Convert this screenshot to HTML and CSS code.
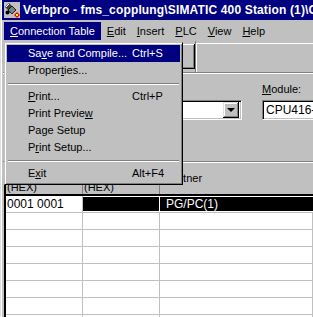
FILE: index.html
```html
<!DOCTYPE html>
<html lang="en">

<head>
    <meta charset="UTF-8">
    <meta name="viewport" content="width=device-width, initial-scale=1.0">
    <title>Verbpro</title>
    <link rel="stylesheet" href="styles.css">
</head>

<body>
    <div class="window">
        <div class="titlebar">
            <svg class="app-icon" width="16" height="16" viewBox="0 0 16 16">
                <rect width="16" height="16" fill="#c0c0c0"/>
                <path d="M1 5 L5 1 L8 4 L4 8 Z" fill="#404040"/>
                <path d="M2 5 L5 2" stroke="#ffffff" stroke-width="1"/>
                <path d="M4 8 L8 4 L12 8 L8 12 Z" fill="#808080" stroke="#000000" stroke-width="0.8"/>
                <circle cx="3.5" cy="10.5" r="2" fill="#000000"/>
                <path d="M10 13 L13 10 L16 13 L13 16 Z" fill="#ff0000"/>
                <rect x="12" y="12" width="2" height="2" fill="#ffff00"/>
            </svg>
            <span class="title">Verbpro - fms_copplung\SIMATIC 400 Station (1)\CPU416-1</span>
        </div>

        <div class="menubar">
            <div class="menu open">
                <span class="menu-label"><u>C</u>onnection Table</span>
                <div class="dropdown">
                    <div class="item active"><span class="label">Sa<u>v</u>e and Compile...</span><span class="key">Ctrl+S</span></div>
                    <div class="item"><span class="label">Proper<u>t</u>ies...</span></div>
                    <div class="separator"></div>
                    <div class="item"><span class="label"><u>P</u>rint...</span><span class="key">Ctrl+P</span></div>
                    <div class="item"><span class="label">Print Previe<u>w</u></span></div>
                    <div class="item"><span class="label">Page Setup</span></div>
                    <div class="item"><span class="label">P<u>r</u>int Setup...</span></div>
                    <div class="separator"></div>
                    <div class="item"><span class="label">E<u>x</u>it</span><span class="key">Alt+F4</span></div>
                </div>
            </div>
            <div class="menu"><span class="menu-label"><u>E</u>dit</span></div>
            <div class="menu"><span class="menu-label"><u>I</u>nsert</span></div>
            <div class="menu"><span class="menu-label"><u>P</u>LC</span></div>
            <div class="menu"><span class="menu-label"><u>V</u>iew</span></div>
            <div class="menu"><span class="menu-label"><u>H</u>elp</span></div>
        </div>

        <div class="toolbar">
            <div class="tools"><button class="tool"></button></div>
            <div class="tool-rest"></div>
        </div>

        <div class="panel">
            <div class="field field-station">
                <div class="combo"><span class="combo-text"></span><span class="combo-btn"></span></div>
            </div>
            <div class="field field-module">
                <label><u>M</u>odule:</label>
                <div class="textbox">CPU416-1</div>
            </div>
        </div>

        <div class="table">
            <div class="thead">
                <div class="th">(HEX)</div>
                <div class="th">(HEX)</div>
                <div class="th th-partner">Partner</div>
            </div>
            <div class="row selected">
                <div class="td">0001 0001</div>
                <div class="td"></div>
                <div class="td td-partner">PG/PC(1)</div>
            </div>
            <div class="row"><div class="td"></div><div class="td"></div><div class="td"></div></div>
            <div class="row"><div class="td"></div><div class="td"></div><div class="td"></div></div>
            <div class="row"><div class="td"></div><div class="td"></div><div class="td"></div></div>
            <div class="row"><div class="td"></div><div class="td"></div><div class="td"></div></div>
            <div class="row"><div class="td"></div><div class="td"></div><div class="td"></div></div>
            <div class="row"><div class="td"></div><div class="td"></div><div class="td"></div></div>
            <div class="row"><div class="td"></div><div class="td"></div><div class="td"></div></div>
        </div>
    </div>
</body>

</html>
```

FILE: styles.css
```css
body {
    margin: 0;
    background-color: #c0c0c0;
    font-family: "Liberation Sans", Arial, sans-serif;
    font-size: 11px;
    overflow: hidden;
}

.window {
    width: 313px;
    height: 317px;
    box-sizing: border-box;
    padding-left: 3px;
    overflow: hidden;
    background-color: #c0c0c0;
    box-shadow: inset 1px 0 #dfdfdf, inset 2px 0 #ffffff;
}

/* title bar */
.titlebar {
    display: flex;
    align-items: center;
    height: 20px;
    margin-left: -1px;
    margin-bottom: 1px;
    padding-left: 2px;
    background-color: #000080;
    color: #ffffff;
    white-space: nowrap;
    overflow: hidden;
}

.app-icon {
    flex: none;
    margin-right: 3px;
}

.title {
    font-weight: bold;
    font-size: 12px;
    letter-spacing: 0.15px;
}

/* menu bar */
.menubar {
    display: flex;
    height: 20px;
    padding-left: 1px;
}

.menu {
    position: relative;
}

.menu-label {
    display: block;
    margin-top: 1px;
    padding: 0 6px 0 6px;
    line-height: 18px;
    white-space: nowrap;
}

.menu + .menu .menu-label {
    padding: 0 5px 0 6px;
}

.menu.open .menu-label {
    background-color: #000080;
    color: #ffffff;
}

.dropdown {
    position: absolute;
    top: calc(100% + 1px);
    left: 0;
    z-index: 10;
    width: 179px;
    box-sizing: border-box;
    padding: 2px;
    background-color: #c0c0c0;
    border: 1px solid;
    border-color: #c0c0c0 #000000 #000000 #c0c0c0;
    box-shadow: inset 1px 1px #ffffff, inset -1px -1px #808080;
}

.item {
    display: flex;
    height: 17px;
    line-height: 17px;
    padding-left: 21px;
    white-space: nowrap;
}

.item .label {
    width: 104px;
}

.item.active {
    background-color: #000080;
    color: #ffffff;
}

.separator {
    height: 9px;
    box-sizing: border-box;
    padding-top: 4px;
}

.separator::before {
    content: "";
    display: block;
    margin: 0 1px;
    border-top: 1px solid #808080;
    border-bottom: 1px solid #ffffff;
}

/* toolbar */
.toolbar {
    display: flex;
    height: 32px;
    box-sizing: border-box;
    border-bottom: 1px solid #808080;
}

.tools {
    display: flex;
    justify-content: flex-end;
    width: 192px;
    border-right: 1px solid #808080;
}

.tool {
    width: 36px;
    height: 25px;
    margin-top: 3px;
    padding: 0;
    border: none;
    background-color: #c0c0c0;
    box-shadow: inset -1px -1px #000000, inset 1px 1px #ffffff, inset -2px -2px #808080;
}

.tool-rest {
    flex: 1;
    margin-top: 2px;
    border-top: 1px solid #ffffff;
    border-left: 1px solid #ffffff;
}

/* station / module panel */
.panel {
    display: flex;
    align-items: flex-end;
    gap: 20px;
    height: 89px;
    box-sizing: border-box;
    padding: 9px 0 0 57px;
    border-top: 1px solid #ffffff;
    border-bottom: 1px solid #808080;
    overflow: hidden;
}

.field {
    margin-bottom: 41px;
}

.field label {
    display: block;
    line-height: 13px;
    margin-bottom: 4px;
}

.field-station {
    flex: none;
    width: 182px;
}

.field-module {
    flex: none;
    width: 100px;
}

.combo,
.textbox {
    display: flex;
    align-items: center;
    height: 20px;
    box-sizing: border-box;
    padding: 2px;
    background-color: #ffffff;
    border: 1px solid;
    border-color: #808080 #ffffff #ffffff #808080;
    box-shadow: inset 1px 1px #000000, inset -1px -1px #c0c0c0;
}

.combo-text {
    flex: 1;
}

.combo-btn {
    position: relative;
    width: 16px;
    height: 16px;
    margin-top: -1px;
    background-color: #c0c0c0;
    box-shadow: inset -1px -1px #000000, inset 1px 1px #dfdfdf, inset -2px -2px #808080, inset 2px 2px #ffffff;
}

.combo-btn::after {
    content: "";
    position: absolute;
    left: 4px;
    top: 6px;
    border-left: 4px solid transparent;
    border-right: 4px solid transparent;
    border-top: 4px solid #000000;
}

.textbox {
    padding-left: 3px;
    font-size: 12px;
    white-space: nowrap;
    overflow: hidden;
}

/* connection table */
.table {
    margin-left: 1px;
    border-left: 2px solid #000000;
}

.thead,
.row {
    display: grid;
    grid-template-columns: 77px 77px 1fr;
}

.thead {
    height: 34px;
    box-sizing: border-box;
    border-top: 1px solid #ffffff;
    border-bottom: 2px solid #000000;
}

.th {
    display: flex;
    flex-direction: column;
    justify-content: flex-end;
    box-sizing: border-box;
    padding: 0 0 1px 1px;
    line-height: 12px;
    border-right: 1px solid #808080;
    white-space: nowrap;
    overflow: hidden;
}

.th-partner {
    justify-content: center;
    padding: 0 0 2px 6px;
    border-right: none;
}

.row {
    height: 17px;
    box-sizing: border-box;
    background-color: #ffffff;
    border-bottom: 1px solid #c0c0c0;
}

.td {
    box-sizing: border-box;
    padding-left: 1px;
    font-size: 12px;
    line-height: 16px;
    border-right: 1px solid #c0c0c0;
    white-space: nowrap;
}

.td-partner {
    padding-left: 6px;
    border-right: none;
}

.row.selected .td + .td {
    background-color: #000000;
    color: #ffffff;
    border-right-color: #ffffff;
    box-shadow: inset 0 1px #ffffff, inset 0 -1px #ffffff;
}
```
